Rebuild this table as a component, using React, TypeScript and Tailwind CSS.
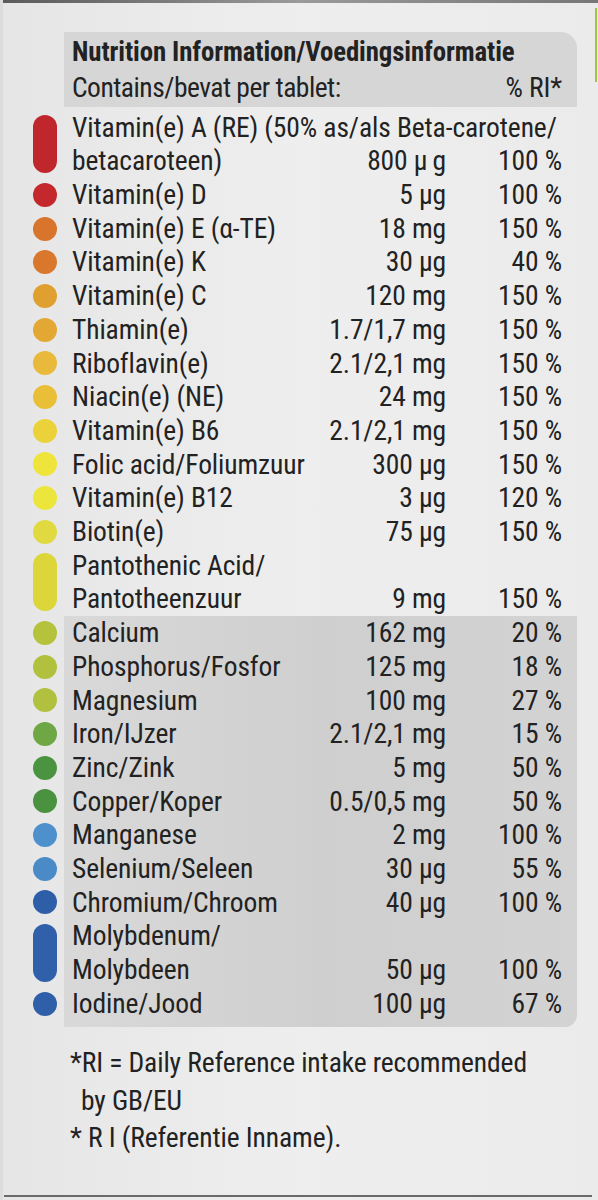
type Item = {
  dot: string;
  name: string;
  first?: string;
  amount: string;
  ri: string;
};

const vitamins: Item[] = [
  { dot: '#c0272d', first: 'Vitamin(e) A (RE) (50% as/als Beta-carotene/', name: 'betacaroteen)', amount: '800 µ\u2009g', ri: '100 %' },
  { dot: '#c4282d', name: 'Vitamin(e) D', amount: '5 µg', ri: '100 %' },
  { dot: '#d8742c', name: 'Vitamin(e) E (α-TE)', amount: '18 mg', ri: '150 %' },
  { dot: '#d9772c', name: 'Vitamin(e) K', amount: '30 µg', ri: '40 %' },
  { dot: '#e0a030', name: 'Vitamin(e) C', amount: '120 mg', ri: '150 %' },
  { dot: '#e3a734', name: 'Thiamin(e)', amount: '1.7/1,7 mg', ri: '150 %' },
  { dot: '#e8b93a', name: 'Riboflavin(e)', amount: '2.1/2,1 mg', ri: '150 %' },
  { dot: '#eabf38', name: 'Niacin(e) (NE)', amount: '24 mg', ri: '150 %' },
  { dot: '#ecd23a', name: 'Vitamin(e) B6', amount: '2.1/2,1 mg', ri: '150 %' },
  { dot: '#eee43c', name: 'Folic acid/Foliumzuur', amount: '300 µg', ri: '150 %' },
  { dot: '#ece53b', name: 'Vitamin(e) B12', amount: '3 µg', ri: '120 %' },
  { dot: '#e0da40', name: 'Biotin(e)', amount: '75 µg', ri: '150 %' },
  { dot: '#dcd63a', first: 'Pantothenic Acid/', name: 'Pantotheenzuur', amount: '9 mg', ri: '150 %' },
];

const minerals: Item[] = [
  { dot: '#b5c33c', name: 'Calcium', amount: '162 mg', ri: '20 %' },
  { dot: '#b1c13e', name: 'Phosphorus/Fosfor', amount: '125 mg', ri: '18 %' },
  { dot: '#b2c040', name: 'Magnesium', amount: '100 mg', ri: '27 %' },
  { dot: '#6ea744', name: 'Iron/IJzer', amount: '2.1/2,1 mg', ri: '15 %' },
  { dot: '#4a9340', name: 'Zinc/Zink', amount: '5 mg', ri: '50 %' },
  { dot: '#4a9140', name: 'Copper/Koper', amount: '0.5/0,5 mg', ri: '50 %' },
  { dot: '#4e90cc', name: 'Manganese', amount: '2 mg', ri: '100 %' },
  { dot: '#4a8bc7', name: 'Selenium/Seleen', amount: '30 µg', ri: '55 %' },
  { dot: '#2f5ea8', name: 'Chromium/Chroom', amount: '40 µg', ri: '100 %' },
  { dot: '#3060aa', first: 'Molybdenum/', name: 'Molybdeen', amount: '50 µg', ri: '100 %' },
  { dot: '#2f5fa8', name: 'Iodine/Jood', amount: '100 µg', ri: '67 %' },
];

function Dot({ item }: { item: Item }) {
  if (item.first) {
    return (
      <div className="h-[67.4px] flex items-center">
        <div className="w-[24px] h-[58px] rounded-full" style={{ background: item.dot }} />
      </div>
    );
  }
  return (
    <div className="h-[33.7px] flex items-center">
      <div className="w-[24px] h-[24px] rounded-full" style={{ background: item.dot }} />
    </div>
  );
}

function Row({ item }: { item: Item }) {
  return (
    <div>
      {item.first && <div className="whitespace-nowrap">{item.first}</div>}
      <div className="grid grid-cols-[1fr_auto_116px] whitespace-nowrap">
        <span>{item.name}</span>
        <span className="text-right">{item.amount}</span>
        <span className="text-right">{item.ri}</span>
      </div>
    </div>
  );
}

function Section({ items, boxed }: { items: Item[]; boxed?: boolean }) {
  return (
    <div className="flex">
      <div className="w-[64px] pl-[33px]">
        {items.map((it) => (
          <Dot key={it.name} item={it} />
        ))}
      </div>
      <div
        className={
          boxed
            ? 'w-[513px] pl-[8px] pr-[15px] pb-[6.5px] rounded-br-[12px] bg-gradient-to-r from-[#d9d9d9] via-[#cfcfcf] to-[#d3d3d3]'
            : 'w-[513px] pl-[8px] pr-[15px]'
        }
      >
        {items.map((it) => (
          <Row key={it.name} item={it} />
        ))}
      </div>
    </div>
  );
}

export default function App() {
  return (
    <div className="relative w-[598px] h-[1200px] overflow-hidden bg-gradient-to-r from-[#e6e6e6] via-[#eeeeee] to-[#ebebeb] text-[#222222] font-['Roboto_Condensed','Roboto',sans-serif] font-stretch-condensed text-[27.5px] tracking-[-0.1px] leading-[33.7px]">
      <div className="pt-[32px]">
        <div className="ml-[64px] w-[513px] rounded-tr-[16px] bg-[#d6d6d6] pl-[8px] pr-[15px] py-[2.5px] leading-[35px]">
          <div className="font-bold text-[26.8px] whitespace-nowrap">Nutrition Information/Voedingsinformatie</div>
          <div className="flex justify-between">
            <span className="tracking-[-0.5px]">Contains/bevat per tablet:</span>
            <span>% RI*</span>
          </div>
        </div>

        <div className="mt-[3.6px]">
          <Section items={vitamins} />
          <Section items={minerals} boxed />
        </div>

        <div className="mt-[17px] pl-[70px] leading-[37.5px] whitespace-nowrap">
          <div>*RI = Daily Reference intake recommended</div>
          <div className="pl-[11px]">by GB/EU</div>
          <div>* R I (Referentie Inname).</div>
        </div>
      </div>

      <div className="absolute top-0 left-0 right-0 h-[3px] bg-gradient-to-r from-[#5a5a5a] via-[#9a9a9a] to-[#777777]" />
      <div className="absolute top-0 bottom-0 left-0 w-[3px] bg-[#dcdcdc]" />
      <div className="absolute top-[8px] right-[1px] w-[2px] h-[74px] bg-[#9cc63f]" />
      <div className="absolute bottom-[3px] left-[4px] right-[6px] h-[2px] bg-[#6a6a6a]" />
    </div>
  );
}
